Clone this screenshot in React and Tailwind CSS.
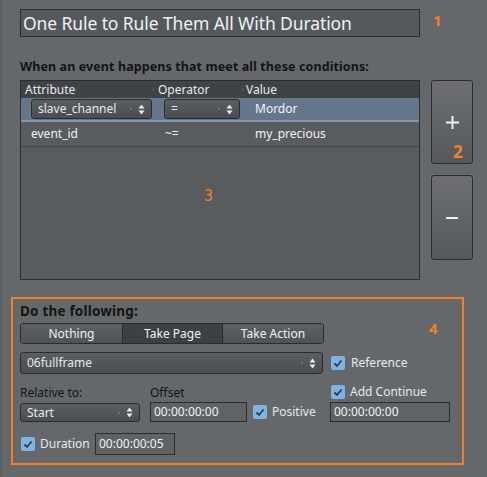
import React from "react";

function Arrows({ className = "" }) {
  return (
    <span className={"flex items-center gap-[6px] " + className}>
      <span className="w-[2px] h-[2px] bg-[#7a7d80] rounded-full" />
      <svg width="7" height="11" viewBox="0 0 7 11">
        <path d="M3.5 0.5 L6.5 4.5 L0.5 4.5 Z" fill="#e8ecf0" />
        <path d="M3.5 10.5 L6.5 6.5 L0.5 6.5 Z" fill="#e8ecf0" />
      </svg>
    </span>
  );
}

function Select({ label, className = "" }) {
  return (
    <div
      className={
        "flex items-center justify-between pl-[6px] pr-[6px] border border-[#2a2c2e] rounded-[3px] bg-gradient-to-b from-[#5b5e61] to-[#4b4e51] text-[#e6eaee] text-[12px] " +
        className
      }
    >
      <span className="leading-none">{label}</span>
      <Arrows />
    </div>
  );
}

function Check() {
  return (
    <span className="w-[14px] h-[14px] rounded-[2px] bg-[#7fb4e2] flex items-center justify-center shrink-0">
      <svg width="10" height="9" viewBox="0 0 10 9">
        <path d="M1.5 4.5 L4 7 L8.5 1.5" fill="none" stroke="#2c3c4c" strokeWidth="1.8" />
      </svg>
    </span>
  );
}

function TimeInput({ value, className = "" }) {
  return (
    <div
      className={
        "flex items-center pl-[3px] border border-[#2a2c2e] bg-[#606366] text-[#eef2f6] text-[12px] leading-none " +
        className
      }
    >
      {value}
    </div>
  );
}

export default function App() {
  return (
    <div
      className="w-[487px] h-[477px] bg-[#65686b] border-l-2 border-[#5c5f62] relative text-[#e6eaee] overflow-hidden"
      style={{ fontFamily: '"Noto Sans", "Open Sans", sans-serif' }}
    >
      <div className="pl-[18px] pt-[9px]">
        <div className="w-[400px] h-[28px] border border-[#2a2c2e] bg-[#56595c] flex items-center pl-[2px] text-[17.5px] text-[#eef2f6] tracking-[-0.1px]">
          One Rule to Rule Them All With Duration
        </div>
        <div className="mt-[22px] text-[12.5px] font-bold text-[#141414] leading-[16px] tracking-[0.1px]">
          When an event happens that meet all these conditions:
        </div>
        <div className="mt-[5px] flex gap-[11px]">
          <div className="w-[400px] h-[200px] border border-[#2a2c2e] bg-[#595c5f] flex flex-col text-[12px]">
            <div className="h-[17px] bg-[#404345] flex items-center text-[#e4eaf2] leading-none relative">
              <span className="absolute left-[4px]">Attribute</span>
              <span className="absolute left-[132px] top-[8px] w-[1px] h-[1px] bg-[#8a8d90]" />
              <span className="absolute left-[137px]">Operator</span>
              <span className="absolute left-[221px] top-[8px] w-[1px] h-[1px] bg-[#8a8d90]" />
              <span className="absolute left-[225px]">Value</span>
            </div>
            <div className="h-[24px] bg-[#66768a] border-b-2 border-[#8797aa] flex items-center relative">
              <Select label="slave_channel" className="absolute left-[10px] w-[121px] h-[20px]" />
              <Select label="=" className="absolute left-[143px] w-[76px] h-[20px]" />
              <span className="absolute left-[234px] leading-none text-[#eef2f6]">Mordor</span>
            </div>
            <div className="h-[25px] border-b border-[#45484b] flex items-center relative text-[#eef2f6]">
              <span className="absolute left-[10px] leading-none">event_id</span>
              <span className="absolute left-[144px] leading-none">~=</span>
              <span className="absolute left-[234px] leading-none">my_precious</span>
            </div>
          </div>
          <div className="flex flex-col gap-[11px]">
            <div className="w-[42px] h-[84px] border border-[#2a2c2e] rounded-[3px] bg-gradient-to-b from-[#6d6f72] to-[#56595c] flex items-center justify-center">
              <svg width="13" height="13" viewBox="0 0 13 13">
                <path d="M6.5 0 V13 M0 6.5 H13" stroke="#eef0f2" strokeWidth="2" />
              </svg>
            </div>
            <div className="w-[42px] h-[85px] border border-[#2a2c2e] rounded-[3px] bg-gradient-to-b from-[#6d6f72] to-[#56595c] flex items-center justify-center">
              <span className="w-[12px] h-[2px] bg-[#eef0f2]" />
            </div>
          </div>
        </div>

        <div className="mt-[17px] -ml-[9px] w-[453px] h-[168px] border-2 border-[#f57f27] pl-[7px] pt-[4px]">
          <div className="text-[13.5px] font-bold text-[#141414] leading-[16px] tracking-[0.2px]">Do the following:</div>
          <div className="mt-[4px] w-[304px] h-[21px] flex border border-[#2a2c2e] rounded-[3px] overflow-hidden text-[12px] text-[#eef2f6]">
            <div className="w-[102px] bg-gradient-to-b from-[#5e6164] to-[#505356] flex items-center justify-center border-r border-[#2a2c2e]">Nothing</div>
            <div className="w-[100px] bg-[#3e4143] flex items-center justify-center border-r border-[#2a2c2e]">Take Page</div>
            <div className="flex-1 bg-gradient-to-b from-[#5e6164] to-[#505356] flex items-center justify-center">Take Action</div>
          </div>
          <div className="mt-[8px] flex items-center">
            <Select label="06fullframe" className="w-[303px] h-[22px] pl-[3px]" />
            <span className="ml-[8px]"><Check /></span>
            <span className="ml-[6px] text-[12px] leading-none">Reference</span>
          </div>
          <div className="mt-[11px] flex">
            <div className="w-[130px]">
              <div className="mt-[1px] text-[12px] leading-[14px] text-[#141414]">Relative to:</div>
              <Select label="Start" className="mt-[3px] w-[120px] h-[19px] pl-[3px]" />
            </div>
            <div className="w-[180px]">
              <div className="mt-[1px] text-[12px] leading-[14px] text-[#141414]">Offset</div>
              <div className="mt-[2px] flex items-center">
                <TimeInput value="00:00:00:00" className="w-[97px] h-[20px]" />
                <span className="ml-[6px]"><Check /></span>
                <span className="ml-[5px] text-[12px] leading-none">Positive</span>
              </div>
            </div>
            <div>
              <div className="flex items-center h-[14px] ml-[1px]">
                <Check />
                <span className="ml-[5px] text-[12px] leading-none">Add Continue</span>
              </div>
              <TimeInput value="00:00:00:00" className="mt-[3px] w-[120px] h-[20px]" />
            </div>
          </div>
          <div className="mt-[11px] flex items-center">
            <span className="ml-[1px]"><Check /></span>
            <span className="ml-[5px] w-[55px] text-[12px] leading-none">Duration</span>
            <TimeInput value="00:00:00:05" className="w-[80px] h-[22px]" />
          </div>
        </div>
      </div>

      <span className="absolute left-[431px] top-[9px] text-[15px] font-bold text-[#f57f27]">1</span>
      <span className="absolute left-[451px] top-[139px] text-[17px] font-bold text-[#f57f27]">2</span>
      <span className="absolute left-[202px] top-[185px] text-[15px] text-[#f57f27]" style={{ fontFamily: '"DejaVu Sans Mono", monospace' }}>3</span>
      <span className="absolute left-[427px] top-[317px] text-[15px] font-bold text-[#f57f27]">4</span>
    </div>
  );
}
